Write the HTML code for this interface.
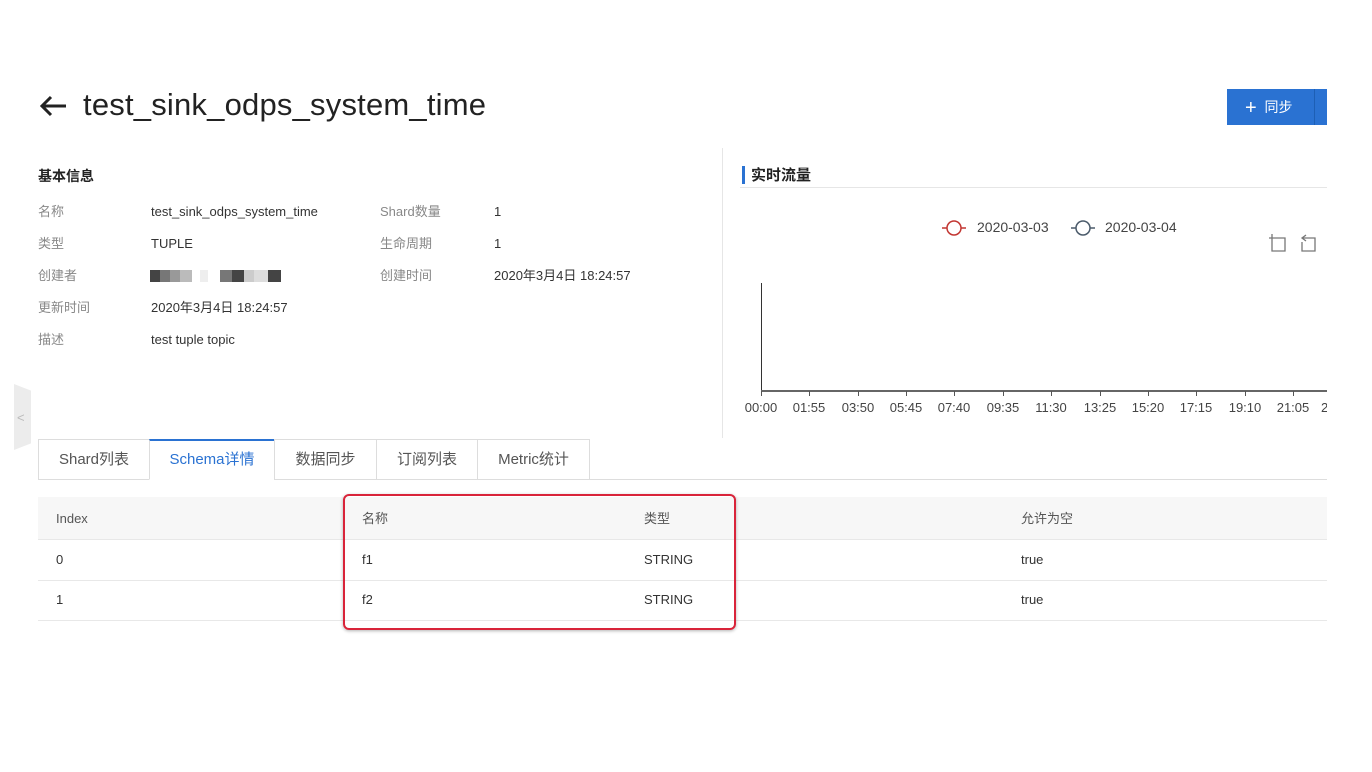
<!DOCTYPE html>
<html><head><meta charset="utf-8"><style>
*{margin:0;padding:0;box-sizing:border-box}
body{width:1372px;height:772px;background:#fff;position:relative;overflow:hidden;font-family:"Liberation Sans","Noto Sans CJK SC",sans-serif;color:#333}
.a{position:absolute;white-space:nowrap}
.l{color:#888;font-size:13px;line-height:16px}
.v{color:#333;font-size:13px;line-height:16px}
.tab{position:absolute;top:439px;height:41px;border:1px solid #ddd;background:#fff;font-size:15px;color:#555;text-align:center;line-height:40px}
.tk{position:absolute;top:400px;font-size:13px;color:#444;width:50px;text-align:center}
.tm{position:absolute;top:391px;width:1px;height:5px;background:#555}
.td{position:absolute;font-size:13px;color:#333;line-height:16px}
</style></head><body>
<svg class="a" style="left:38px;top:94px" width="30" height="24" viewBox="0 0 30 24"><path d="M28 12H4M13 3L4 12l9 9" fill="none" stroke="#222" stroke-width="3"/></svg>
<div class="a" style="left:83px;top:87px;font-size:31px;color:#222;letter-spacing:0.2px">test_sink_odps_system_time</div>
<div class="a" style="left:1227px;top:89px;width:100px;height:36px;background:#2a72d2;color:#fff;font-size:14px;line-height:36px;padding-left:18px"><span style="font-size:20px;vertical-align:-2px">+</span>&nbsp; 同步</div>
<div class="a" style="left:1314px;top:89px;width:1px;height:36px;background:#1d5fb5"></div>

<div class="a" style="left:38px;top:168px;font-size:14px;font-weight:bold;color:#222;line-height:16px">基本信息</div>
<div class="a l" style="left:38px;top:204px">名称</div><div class="a v" style="left:151px;top:204px">test_sink_odps_system_time</div>
<div class="a l" style="left:380px;top:204px">Shard数量</div><div class="a v" style="left:494px;top:204px">1</div>
<div class="a l" style="left:38px;top:236px">类型</div><div class="a v" style="left:151px;top:236px">TUPLE</div>
<div class="a l" style="left:380px;top:236px">生命周期</div><div class="a v" style="left:494px;top:236px">1</div>
<div class="a l" style="left:38px;top:268px">创建者</div>
<div class="a" style="left:150px;top:270px;width:131px;height:12px;background:linear-gradient(90deg,#444 0 10px,#777 10px 20px,#999 20px 30px,#bbb 30px 42px,#fff 42px 50px,#eee 50px 58px,#fff 58px 70px,#777 70px 82px,#444 82px 94px,#ccc 94px 104px,#ddd 104px 118px,#444 118px)"></div>
<div class="a l" style="left:380px;top:268px">创建时间</div><div class="a v" style="left:494px;top:268px">2020年3月4日 18:24:57</div>
<div class="a l" style="left:38px;top:300px">更新时间</div><div class="a v" style="left:151px;top:300px">2020年3月4日 18:24:57</div>
<div class="a l" style="left:38px;top:332px">描述</div><div class="a v" style="left:151px;top:332px">test tuple topic</div>

<div class="a" style="left:722px;top:148px;width:1px;height:290px;background:#e6e6e6"></div>
<div class="a" style="left:742px;top:166px;width:3px;height:18px;background:#2a72d2"></div>
<div class="a" style="left:751px;top:167px;font-size:15px;font-weight:bold;color:#222;line-height:17px">实时流量</div>
<div class="a" style="left:740px;top:187px;width:587px;height:1px;background:#e6e6e6"></div>
<svg class="a" style="left:941px;top:218px" width="26" height="20"><path d="M1 10H25" stroke="#c23531" stroke-width="1.5"/><circle cx="13" cy="10" r="7" fill="#fff" stroke="#c23531" stroke-width="1.5"/></svg>
<div class="a" style="left:977px;top:219px;font-size:14px;color:#444">2020-03-03</div>
<svg class="a" style="left:1070px;top:218px" width="26" height="20"><path d="M1 10H25" stroke="#4a5a6a" stroke-width="1.5"/><circle cx="13" cy="10" r="7" fill="#fff" stroke="#4a5a6a" stroke-width="1.5"/></svg>
<div class="a" style="left:1105px;top:219px;font-size:14px;color:#444">2020-03-04</div>
<svg class="a" style="left:1268px;top:233px" width="50" height="20"><path d="M4 1V5H17V18H4V5M1 5H4" fill="none" stroke="#777" stroke-width="1.3"/><path d="M34 5H47V18H34V9M38 2L34 5L38 8" fill="none" stroke="#777" stroke-width="1.3"/></svg>
<div class="a" style="left:761px;top:283px;width:1px;height:109px;background:#333"></div>
<div class="a" style="left:761px;top:390px;width:566px;height:2px;background:#666"></div>
<div class="tm" style="left:761px"></div><div class="tk" style="left:736px">00:00</div>
<div class="tm" style="left:809px"></div><div class="tk" style="left:784px">01:55</div>
<div class="tm" style="left:858px"></div><div class="tk" style="left:833px">03:50</div>
<div class="tm" style="left:906px"></div><div class="tk" style="left:881px">05:45</div>
<div class="tm" style="left:954px"></div><div class="tk" style="left:929px">07:40</div>
<div class="tm" style="left:1003px"></div><div class="tk" style="left:978px">09:35</div>
<div class="tm" style="left:1051px"></div><div class="tk" style="left:1026px">11:30</div>
<div class="tm" style="left:1100px"></div><div class="tk" style="left:1075px">13:25</div>
<div class="tm" style="left:1148px"></div><div class="tk" style="left:1123px">15:20</div>
<div class="tm" style="left:1196px"></div><div class="tk" style="left:1171px">17:15</div>
<div class="tm" style="left:1245px"></div><div class="tk" style="left:1220px">19:10</div>
<div class="tm" style="left:1293px"></div><div class="tk" style="left:1268px">21:05</div>
<div class="a" style="left:1321px;top:400px;font-size:13px;color:#444">2</div>
<div class="a" style="left:1327px;top:0;width:45px;height:772px;background:#fff"></div>

<div class="a" style="left:14px;top:384px;width:17px;height:66px;background:#ececec;clip-path:polygon(0 0,100% 10%,100% 90%,0 100%)"></div>
<div class="a" style="left:17px;top:410px;font-size:13px;color:#bbb">&lt;</div>

<div class="a" style="left:38px;top:479px;width:1289px;height:1px;background:#ddd"></div>
<div class="tab" style="left:38px;width:112px">Shard列表</div>
<div class="tab" style="left:149px;width:126px;border-top:2px solid #2a72d2;border-bottom-color:#fff;color:#2a72d2;line-height:38px">Schema详情</div>
<div class="tab" style="left:274px;width:103px">数据同步</div>
<div class="tab" style="left:376px;width:102px">订阅列表</div>
<div class="tab" style="left:477px;width:113px">Metric统计</div>

<div class="a" style="left:38px;top:497px;width:1289px;height:43px;background:#f7f7f7;border-bottom:1px solid #e8e8e8"></div>
<div class="a" style="left:38px;top:580px;width:1289px;height:1px;background:#e8e8e8"></div>
<div class="a" style="left:38px;top:620px;width:1289px;height:1px;background:#e8e8e8"></div>
<div class="td" style="left:56px;top:511px;color:#555">Index</div>
<div class="td" style="left:362px;top:511px;color:#555">名称</div>
<div class="td" style="left:644px;top:511px;color:#555">类型</div>
<div class="td" style="left:1021px;top:511px;color:#555">允许为空</div>
<div class="td" style="left:56px;top:552px">0</div><div class="td" style="left:362px;top:552px">f1</div><div class="td" style="left:644px;top:552px">STRING</div><div class="td" style="left:1021px;top:552px">true</div>
<div class="td" style="left:56px;top:592px">1</div><div class="td" style="left:362px;top:592px">f2</div><div class="td" style="left:644px;top:592px">STRING</div><div class="td" style="left:1021px;top:592px">true</div>
<div class="a" style="left:343px;top:494px;width:393px;height:136px;border:2.5px solid #d9243a;border-radius:6px;box-shadow:0 1px 3px rgba(0,0,0,.3)"></div>
</body></html>
